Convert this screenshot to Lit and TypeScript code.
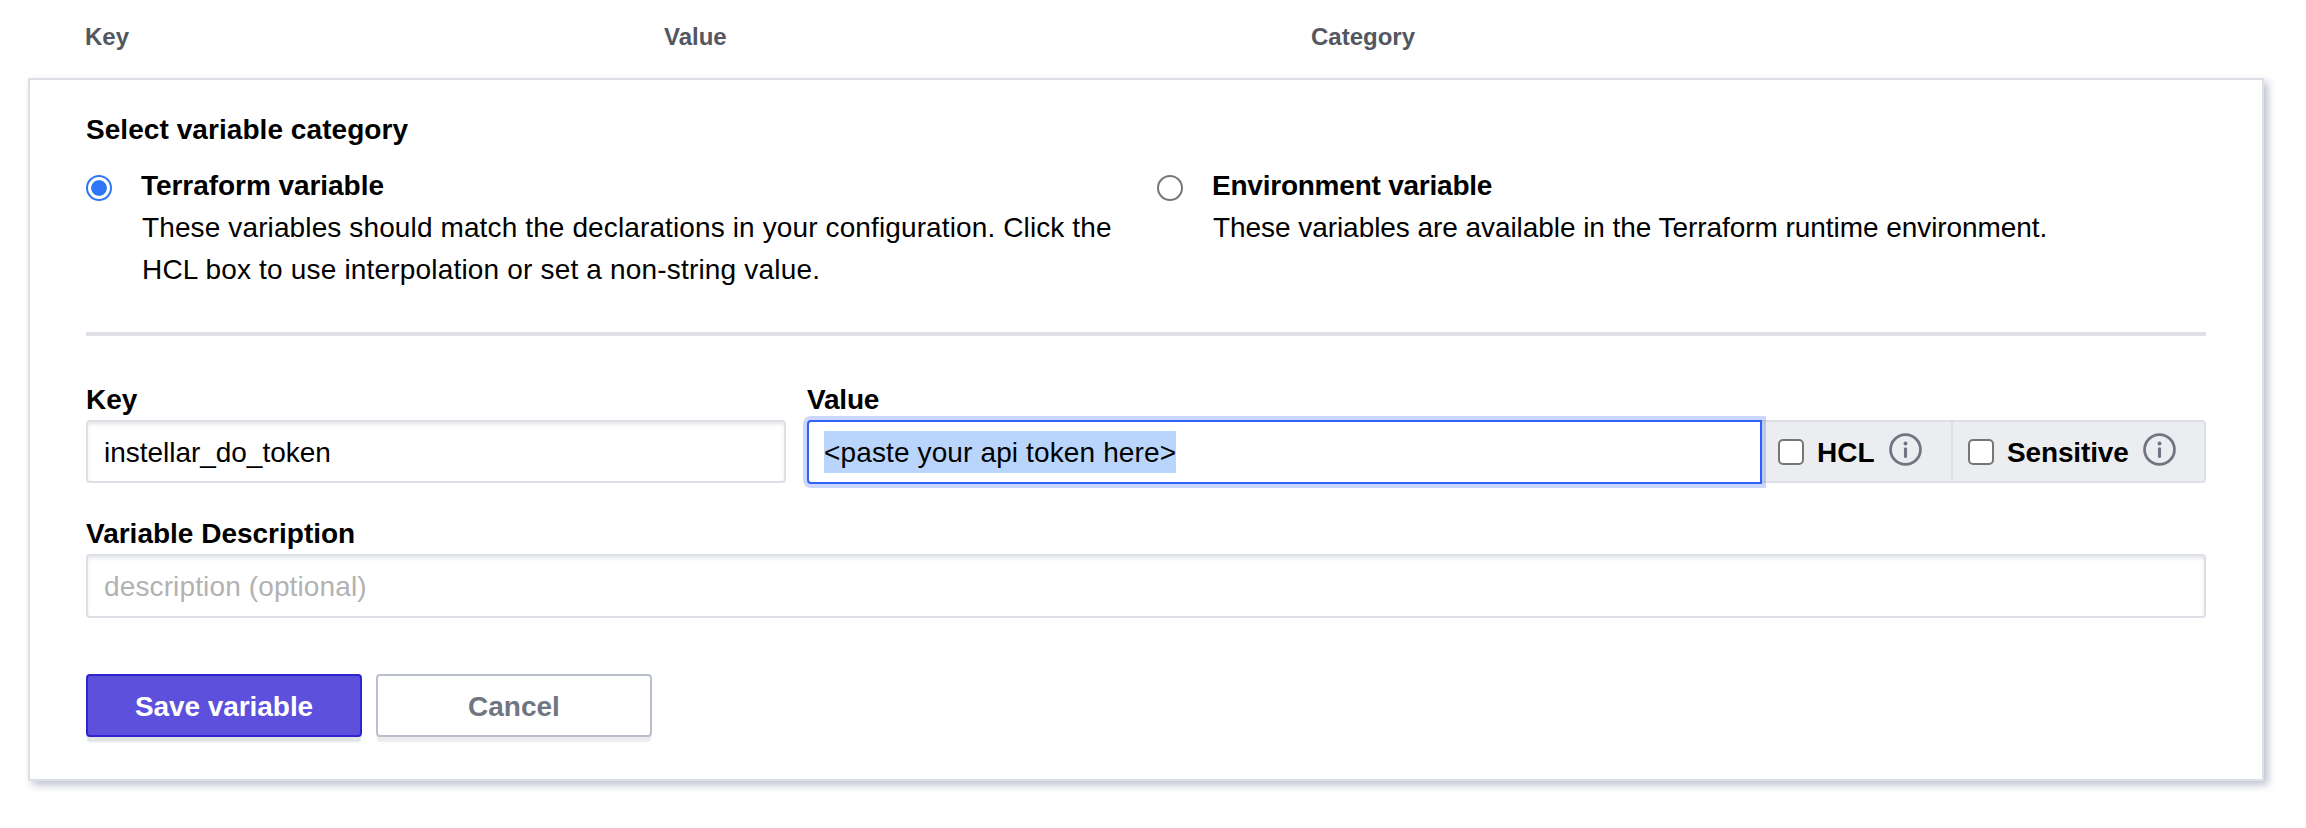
import { LitElement, html, css } from "lit";
import { customElement, property } from "lit/decorators.js";

const infoIcon = html`<svg class="info" width="33" height="33" viewBox="0 0 32 32" fill="none" aria-hidden="true">
  <circle cx="16" cy="16" r="14.5" stroke="#6f7682" stroke-width="2.7" />
  <path d="M16 15.3v7.4" stroke="#6f7682" stroke-width="3" stroke-linecap="round" />
  <circle cx="16" cy="10.1" r="1.9" fill="#6f7682" />
</svg>`;

@customElement("category-option")
export class CategoryOption extends LitElement {
  @property() label = "";
  @property({ type: Boolean }) checked = false;

  static styles = css`
    :host { display: flex; }
    .radio {
      box-sizing: border-box; flex: none; width: 26px; height: 26px;
      margin: 11px 29px 0 0; border: 2px solid #767676; border-radius: 50%;
      background: #fff;
    }
    .radio.on { border-color: #2f75f7; background: radial-gradient(circle, #2f75f7 7.4px, #fff 8.2px); }
    .title {
      height: 42px; font-weight: 700; line-height: 43px; white-space: nowrap;
      letter-spacing: var(--title-spacing, 0);
    }
    .text { padding: 1px 0 0 1px; line-height: 42px; }
  `;

  render() {
    return html`
      <span class="radio ${this.checked ? "on" : ""}" role="radio" aria-checked=${this.checked}></span>
      <div>
        <div class="title">${this.label}</div>
        <div class="text"><slot></slot></div>
      </div>`;
  }
}

@customElement("app-root")
export class AppRoot extends LitElement {
  static styles = css`
    :host {
      display: block; box-sizing: border-box; height: 828px; background: #fff;
      font-family: "Liberation Sans", Arial, sans-serif; font-size: 28px; color: #000;
    }
    * { box-sizing: border-box; }
    .head {
      display: grid; grid-template-columns: 579px 647px 1fr; height: 78px;
      padding: 17px 0 0 85px; font-size: 24px; line-height: 40px; font-weight: 700; color: #525761;
    }
    .card {
      height: 703px; margin: 0 42px 0 28px; padding: 28px 56px 0; border: 2px solid #dcdfe5;
      background: #fff; box-shadow: 4px 4px 8px #bfc3d0;
    }
    .legend, .label { height: 42px; font-weight: 700; line-height: 43px; }
    .legend { margin-bottom: 14px; letter-spacing: 0.06px; }
    .options { display: grid; grid-template-columns: 1071px 1fr; height: 126px; }
    .terraform { letter-spacing: 0.12px; --title-spacing: -0.05px; }
    .environment { letter-spacing: -0.06px; --title-spacing: -0.23px; }
    .wide { letter-spacing: 0.18px; }
    .rule { height: 4px; margin: 42px 0; background: #dee0e6; }
    .fields { display: grid; grid-template-columns: 700px 1fr; column-gap: 21px; }
    .field {
      display: flex; align-items: center; height: 63px; padding: 2px 16px 0; border: 2px solid #dcdfe5;
      border-radius: 4px; box-shadow: inset 0 3px 4px -1px #e3e4e7; background: #fff; line-height: 43px;
      letter-spacing: -0.03px;
    }
    .value-label { letter-spacing: -0.2px; }
    .group { display: flex; }
    .focus {
      position: relative; flex: none; width: 955px; height: 64px; padding: 0 15px; border-color: #2f61f5;
      border-radius: 4px 0 0 4px; box-shadow: 0 0 0 4px rgba(47, 97, 245, 0.25);
    }
    .selected { height: 42px; background: #b9d5fb; letter-spacing: 0.13px; }
    .addons {
      display: flex; flex: 1; height: 63px; border: 2px solid #dcdfe5; border-left: 0;
      border-radius: 0 4px 4px 0; background: #ecedf1; font-weight: 700; line-height: 43px;
    }
    .addon { display: flex; align-items: center; padding: 2px 0 0 16px; }
    .hcl { width: 189px; }
    .sensitive { flex: 1; padding-left: 15px; border-left: 2px solid #dcdfe5; letter-spacing: -0.15px; }
    .box {
      width: 26px; height: 26px; margin: 0 13px 1px 0; border: 2px solid #767676;
      border-radius: 5px; background: #fff;
    }
    .info { margin: 0 0 7px 14px; }
    .description { margin-top: 28px; }
    .placeholder { height: 64px; padding-top: 1px; color: #b2b2b2; letter-spacing: 0.13px; }
    .actions { display: flex; gap: 14px; margin-top: 56px; }
    .button {
      width: 276px; height: 63px; padding: 2px 0 0; border: 2px solid #b9bfcc; border-radius: 4px;
      background: #fff; color: #6f7682; font: inherit; font-weight: 700; line-height: 43px;
      box-shadow: 0 6px 2px -1px #ececee;
    }
    .primary {
      border-color: #2e25d0; background: #5c50dd; color: #fff; letter-spacing: -0.06px;
      box-shadow: 0 6px 2px -1px #e1e3e5;
    }
  `;

  render() {
    return html`
      <div class="head"><span>Key</span><span>Value</span><span>Category</span></div>
      <main class="card">
        <div class="legend">Select variable category</div>
        <div class="options">
          <category-option class="terraform" label="Terraform variable" checked>
            These variables should match the declarations in your configuration. Click the<br />
            <span class="wide">HCL box to use interpolation or set a non-string value.</span>
          </category-option>
          <category-option class="environment" label="Environment variable">
            These variables are available in the Terraform runtime environment.
          </category-option>
        </div>
        <div class="rule"></div>
        <div class="fields">
          <div>
            <div class="label">Key</div>
            <div class="field">instellar_do_token</div>
          </div>
          <div>
            <div class="label value-label">Value</div>
            <div class="group">
              <div class="field focus"><span class="selected">&lt;paste your api token here&gt;</span></div>
              <div class="addons">
                <label class="addon hcl"><span class="box"></span>HCL${infoIcon}</label>
                <label class="addon sensitive"><span class="box"></span>Sensitive${infoIcon}</label>
              </div>
            </div>
          </div>
        </div>
        <div class="description">
          <div class="label">Variable Description</div>
          <div class="field placeholder">description (optional)</div>
        </div>
        <div class="actions">
          <button class="button primary">Save variable</button>
          <button class="button">Cancel</button>
        </div>
      </main>`;
  }
}
